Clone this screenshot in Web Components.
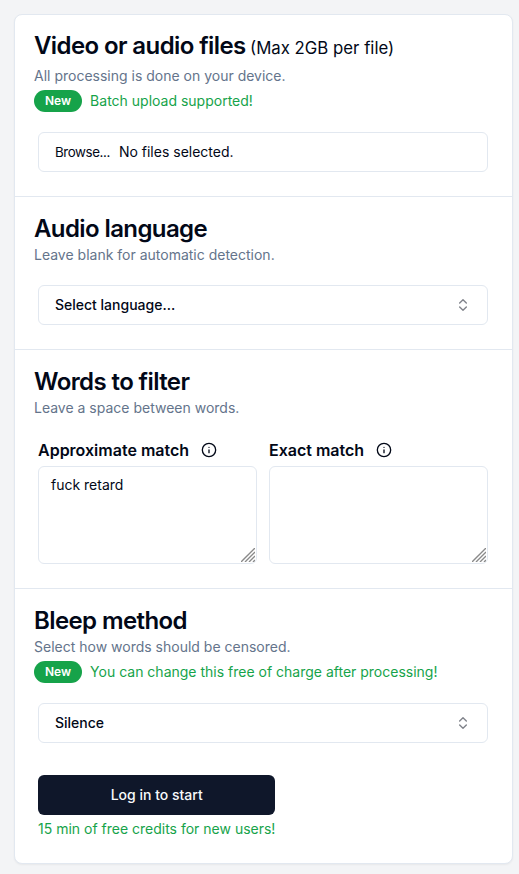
<!DOCTYPE html>
<html lang="en">
<head>
<meta charset="utf-8">
<title>Bleep</title>
<style>
    html, body { height: 100%; }
    body {
        margin: 0;
        background: #f3f4f6;
        color: #020817;
        font-family: Inter, "Liberation Sans", sans-serif;
        overflow: hidden;
    }
</style>
</head>
<body>
<bleep-form>
    <form-section first>
        <span slot="title">Video or audio files <small>(Max 2GB per file)</small></span>
        <span slot="hint">All processing is done on your device.</span>
        <new-note slot="note">Batch upload supported!</new-note>
        <file-box></file-box>
    </form-section>

    <form-section>
        <span slot="title">Audio language</span>
        <span slot="hint">Leave blank for automatic detection.</span>
        <select-box strong>Select language...</select-box>
    </form-section>

    <form-section>
        <span slot="title">Words to filter</span>
        <span slot="hint">Leave a space between words.</span>
        <filter-fields>
            <filter-field label="Approximate match" value="fuck retard"></filter-field>
            <filter-field label="Exact match"></filter-field>
        </filter-fields>
    </form-section>

    <form-section last>
        <span slot="title">Bleep method</span>
        <span slot="hint">Select how words should be censored.</span>
        <new-note slot="note">You can change this free of charge after processing!</new-note>
        <select-box>Silence</select-box>
        <start-button>15 min of free credits for new users!</start-button>
    </form-section>
</bleep-form>

<script>
// (PARENT) the white card around all the sections
class BleepForm extends HTMLElement {
    constructor() {
        super();
        this.attachShadow({ mode: 'open' });
        this.shadowRoot.innerHTML = `
        <style>
            :host {
                display: block;
                padding: 14px 6px 0 14px;
            }

            .card {
                background: white;
                border: 1px solid #e2e8f0;
                border-radius: 8px;
                box-shadow: 0 1px 2px rgba(0, 0, 0, 0.05);
                display: flex;
                flex-direction: column;
            }
        </style>

        <div class="card"><slot></slot></div>
        `;
    }
}

// One block of the form: heading, hint, optional note, then its controls
class FormSection extends HTMLElement {
    constructor() {
        super();
        this.attachShadow({ mode: 'open' });
        this.shadowRoot.innerHTML = `
        <style>
            :host {
                display: block;
                padding: 16px 19px 24px 19px;
                border-bottom: 1px solid #e2e8f0;
            }

            :host([first]) {
                padding-top: 15px;
            }

            :host([last]) {
                border-bottom: none;
            }

            h2 {
                margin: 0;
                font-size: 24px;
                line-height: 32px;
                font-weight: 600;
                letter-spacing: -0.6px;
            }

            p {
                margin: 0;
                font-size: 14px;
                line-height: 20px;
                color: #64748b;
            }

            :host([first]) p {
                margin-top: 2px;
            }

            .controls {
                display: flex;
                flex-direction: column;
                padding: 20px 5px 0 4px;
            }
        </style>

        <h2><slot name="title"></slot></h2>
        <p><slot name="hint"></slot></p>
        <slot name="note"></slot>
        <div class="controls"><slot></slot></div>
        `;
    }

    connectedCallback() {
        // the size note in the title is light page content, so style it from here
        let small = this.querySelector('small');

        if (small) {
            small.style.cssText = 'font-size:16.8px;font-weight:400;letter-spacing:0;margin-left:-1px';
        }
    }
}

class NewNote extends HTMLElement {
    constructor() {
        super();
        this.attachShadow({ mode: 'open' });
        this.shadowRoot.innerHTML = `
        <style>
            :host {
                display: flex;
                align-items: center;
                gap: 8px;
                margin-top: 4px;
                font-size: 14px;
                line-height: 20px;
                color: #16a34a;
            }

            .badge {
                display: inline-flex;
                align-items: center;
                height: 22px;
                padding: 0 11px;
                border-radius: 999px;
                background: #16a34a;
                color: white;
                font-size: 12px;
                font-weight: 600;
            }
        </style>

        <span class="badge">New</span>
        <span><slot></slot></span>
        `;
    }
}

class FileBox extends HTMLElement {
    constructor() {
        super();
        this.attachShadow({ mode: 'open' });
        this.shadowRoot.innerHTML = `
        <style>
            :host {
                display: flex;
                align-items: center;
                gap: 9px;
                height: 40px;
                box-sizing: border-box;
                padding: 0 16px 1px;
                border: 1px solid #e2e8f0;
                border-radius: 6px;
                font-size: 14px;
            }

            .browse {
                font-size: 13.33px;
                letter-spacing: -0.4px;
            }
        </style>

        <span class="browse">Browse...</span>
        <span>No files selected.</span>
        `;
    }
}

class SelectBox extends HTMLElement {
    constructor() {
        super();
        this.attachShadow({ mode: 'open' });
        this.shadowRoot.innerHTML = `
        <style>
            :host {
                display: flex;
                align-items: center;
                justify-content: space-between;
                height: 40px;
                box-sizing: border-box;
                padding: 0 16px;
                border: 1px solid #e2e8f0;
                border-radius: 6px;
                font-size: 14px;
                font-weight: 500;
            }

            span {
                margin-bottom: 1px;
            }

            svg {
                width: 16px;
                height: 16px;
                opacity: 0.5;
            }
        </style>

        <span><slot></slot></span>
        <svg viewBox="0 0 24 24" fill="none" stroke="currentColor" stroke-width="2" stroke-linecap="round" stroke-linejoin="round">
            <path d="m7 15 5 5 5-5"></path>
            <path d="m7 9 5-5 5 5"></path>
        </svg>
        `;
    }
}

class FilterFields extends HTMLElement {
    constructor() {
        super();
        this.attachShadow({ mode: 'open' });
        this.shadowRoot.innerHTML = `
        <style>
            :host {
                display: grid;
                grid-template-columns: 1fr 1fr;
                gap: 12px;
            }
        </style>

        <slot></slot>
        `;
    }
}

class FilterField extends HTMLElement {
    constructor() {
        super();
        this.attachShadow({ mode: 'open' });
        this.shadowRoot.innerHTML = `
        <style>
            :host {
                display: flex;
                flex-direction: column;
                min-width: 0;
            }

            label {
                display: flex;
                align-items: center;
                gap: 12px;
                height: 24px;
                margin-bottom: 4px;
                font-size: 16px;
                font-weight: 600;
            }

            svg {
                width: 16px;
                height: 16px;
            }

            .box {
                position: relative;
            }

            textarea {
                display: block;
                width: 100%;
                height: 98px;
                box-sizing: border-box;
                margin: 0;
                padding: 8px 12px;
                border: 1px solid #e2e8f0;
                border-radius: 6px;
                outline: none;
                resize: none;
                background: white;
                color: inherit;
                font: 14px/20px Inter, "Liberation Sans", sans-serif;
            }

            /* resize grip, drawn over the corner of the textarea */
            .grip {
                position: absolute;
                right: 2px;
                bottom: 2px;
                width: 14px;
                height: 14px;
                stroke: #8a8a8a;
                stroke-width: 1.4;
            }
        </style>

        <label>
            <span id="label"></span>
            <svg viewBox="0 0 24 24" fill="none" stroke="currentColor" stroke-width="2" stroke-linecap="round" stroke-linejoin="round">
                <circle cx="12" cy="12" r="10"></circle>
                <path d="M12 16v-4"></path>
                <path d="M12 8h.01"></path>
            </svg>
        </label>
        <div class="box">
            <textarea></textarea>
            <svg class="grip" viewBox="0 0 14 14">
                <path d="M0 14 14 0M4 14 14 4M8 14 14 8M12 14 14 12"></path>
            </svg>
        </div>
        `;
    }

    connectedCallback() {
        this.shadowRoot.querySelector('#label').textContent = this.getAttribute('label');
        this.shadowRoot.querySelector('textarea').textContent = this.getAttribute('value') || '';
    }
}

class StartButton extends HTMLElement {
    constructor() {
        super();
        this.attachShadow({ mode: 'open' });
        this.shadowRoot.innerHTML = `
        <style>
            :host {
                display: block;
                width: fit-content;
                margin-top: 32px;
            }

            button {
                display: block;
                width: 100%;
                height: 40px;
                border: none;
                border-radius: 6px;
                background: #0f172a;
                color: #f8fafc;
                font: 500 14px/20px Inter, "Liberation Sans", sans-serif;
            }

            p {
                margin: 4px 0 0;
                font-size: 14px;
                line-height: 20px;
                color: #16a34a;
                white-space: nowrap;
            }
        </style>

        <button type="button">Log in to start</button>
        <p><slot></slot></p>
        `;
    }
}

customElements.define('bleep-form', BleepForm);
customElements.define('form-section', FormSection);
customElements.define('new-note', NewNote);
customElements.define('file-box', FileBox);
customElements.define('select-box', SelectBox);
customElements.define('filter-fields', FilterFields);
customElements.define('filter-field', FilterField);
customElements.define('start-button', StartButton);
</script>
</body>
</html>
